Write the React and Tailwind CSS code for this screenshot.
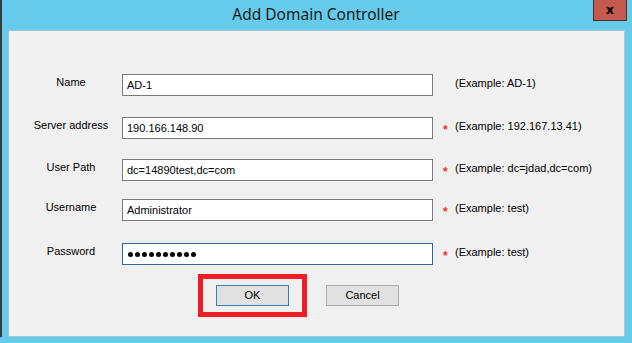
import React from 'react';

const rows = [
  { label: 'Name', value: 'AD-1', hint: '(Example: AD-1)', required: false, mt: 'mt-[43px]' },
  { label: 'Server address', value: '190.166.148.90', hint: '(Example: 192.167.13.41)', required: true, mt: 'mt-[21px]' },
  { label: 'User Path', value: 'dc=14890test,dc=com', hint: '(Example: dc=jdad,dc=com)', required: true, mt: 'mt-[20px]' },
  { label: 'Username', value: 'Administrator', hint: '(Example: test)', required: true, mt: 'mt-[18px]' },
];

function FieldRow({ label, children, hint, required, mt, focused }) {
  return (
    <div className={`flex items-center h-[22px] ${mt}`}>
      <div className="w-[113px] pl-[11px] text-center -mt-[5px] shrink-0">{label}</div>
      <div
        className={`w-[311px] h-[22px] bg-white border flex items-center pl-[4px] shrink-0 ${
          focused ? 'border-[#2f6396]' : 'border-[#7a7a7a]'
        }`}
      >
        {children}
      </div>
      <div className="w-[22px] shrink-0 pl-[10px] text-[#f0302a] text-[12px] font-bold mt-[4px] leading-none">
        {required ? '*' : ''}
      </div>
      <div className="-mt-[3px] whitespace-nowrap">{hint}</div>
    </div>
  );
}

export default function App() {
  return (
    <div className="w-[632px] h-[343px] bg-[#66caea] flex overflow-hidden font-['Liberation_Sans',sans-serif] text-[11px] text-black">
      <div className="w-[2px] h-[337px] bg-[#2d3a3f] shrink-0" />
      <div className="flex-1 flex flex-col">
        {/* title bar */}
        <div className="h-[30px] flex items-start -ml-[2px]">
          <div className="w-[39px] shrink-0" />
          <div className="flex-1 h-[30px] flex items-center justify-center">
            <span className="font-['Noto_Sans',sans-serif] text-[15.5px] text-[#1a1a1a] -mt-[1px]">Add Domain Controller</span>
          </div>
          <div className="w-[34px] h-[21px] mr-[5px] shrink-0 bg-[#c4594f] border-x border-b border-[#4a2f2c] flex items-center justify-center">
            <span className="font-['DejaVu_Sans',sans-serif] font-bold text-[13px] leading-none -mt-[2px]">x</span>
          </div>
        </div>

        <div className="ml-[6px] w-[617px] h-[307px] bg-[#f0f0f0] border border-[#a5c6d3] flex flex-col">
          {rows.map((r) => (
            <FieldRow key={r.label} label={r.label} hint={r.hint} required={r.required} mt={r.mt}>
              <span>{r.value}</span>
            </FieldRow>
          ))}
          <FieldRow label="Password" hint="(Example: test)" required mt="mt-[22px]" focused>
            <div className="flex gap-[2px] pl-[1px]">
              {Array.from({ length: 10 }).map((_, i) => (
                <span key={i} className="w-[5px] h-[5px] rounded-full bg-black" />
              ))}
            </div>
          </FieldRow>

          <div className="flex mt-[9px] ml-[189px]">
            <div className="border-[5px] border-[#ee1c25] px-[13px] py-[6px]">
              <div className="w-[73px] h-[21px] bg-[#e1e1e1] border border-[#3c7fb1] flex items-center justify-center">
                OK
              </div>
            </div>
            <div className="ml-[19px] mt-[11px] w-[73px] h-[21px] bg-[#e1e1e1] border border-[#adadad] flex items-center justify-center">
              Cancel
            </div>
          </div>
        </div>
      </div>
    </div>
  );
}
